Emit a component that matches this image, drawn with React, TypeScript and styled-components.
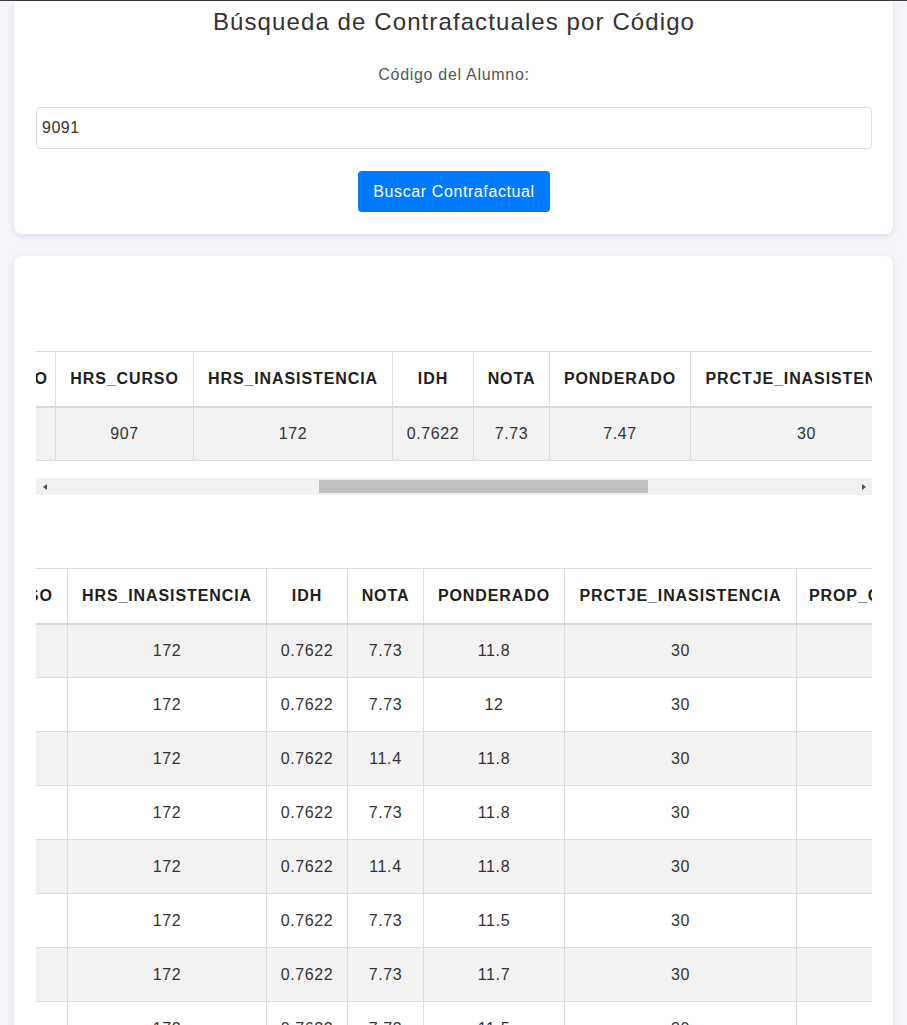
import React, { useLayoutEffect, useRef, useState } from "react";
import styled, { createGlobalStyle } from "styled-components";

const GlobalStyle = createGlobalStyle`
  html, body {
    margin: 0;
    padding: 0;
    overflow: hidden;
    background: #f4f4f9;
    font-family: "Liberation Sans", Arial, sans-serif;
    color: #333;
  }
  * { box-sizing: border-box; }
`;

type Column = { key: string; width: number };

const columns: Column[] = [
  { key: "CICLO", width: 100 },
  { key: "CODIGO", width: 110 },
  { key: "CREDITOS_APROBADOS", width: 225 },
  { key: "EDAD", width: 80 },
  { key: "ESCALA", width: 85 },
  { key: "GENERO", width: 95 },
  { key: "HRS_CURSO", width: 138 },
  { key: "HRS_INASISTENCIA", width: 199 },
  { key: "IDH", width: 81 },
  { key: "NOTA", width: 76 },
  { key: "PONDERADO", width: 141 },
  { key: "PRCTJE_INASISTENCIA", width: 232 },
  { key: "PROP_CREDITOS_APROBADOS", width: 278 },
  { key: "SEDE", width: 90 },
  { key: "TURNO", width: 108 },
];

const tableWidth = columns.reduce((s, c) => s + c.width, 0);

type Row = Record<string, string>;

const base: Row = {
  CICLO: "6",
  CODIGO: "9091",
  CREDITOS_APROBADOS: "118",
  EDAD: "22",
  ESCALA: "3",
  GENERO: "M",
  HRS_CURSO: "907",
  HRS_INASISTENCIA: "172",
  IDH: "0.7622",
  NOTA: "7.73",
  PONDERADO: "7.47",
  PRCTJE_INASISTENCIA: "30",
  PROP_CREDITOS_APROBADOS: "0.62",
  SEDE: "1",
  TURNO: "2",
};

const original: Row[] = [base];

const variants: Array<[string, string]> = [
  ["7.73", "11.8"],
  ["7.73", "12"],
  ["11.4", "11.8"],
  ["7.73", "11.8"],
  ["11.4", "11.8"],
  ["7.73", "11.5"],
  ["7.73", "11.7"],
  ["7.73", "11.5"],
];

const counterfactuals: Row[] = variants.map(([nota, pond]) => ({
  ...base,
  NOTA: nota,
  PONDERADO: pond,
}));

const TopLine = styled.div`
  height: 1px;
  background: #3a3a3a;
`;

const Page = styled.main`
  display: flex;
  flex-direction: column;
  gap: 22px;
  padding: 0 14px;
`;

const Card = styled.section<{ $cut?: boolean }>`
  background: #fff;
  border-radius: ${(p) => (p.$cut ? "0 0 8px 8px" : "8px")};
  box-shadow: 0 2px 6px rgba(30, 30, 60, 0.1);
  padding: ${(p) => (p.$cut ? "7px 21px 22px 22px" : "22px 21px 22px 22px")};
`;

const SearchForm = styled.form`
  display: flex;
  flex-direction: column;
  align-items: center;
`;

const Title = styled.h2`
  margin: 0;
  font-size: 24px;
  line-height: 28px;
  font-weight: 400;
  letter-spacing: 1.1px;
  color: #333;
  text-align: center;
`;

const Label = styled.label`
  margin-top: 30px;
  font-size: 16px;
  line-height: 18px;
  letter-spacing: 0.7px;
  color: #555;
`;

const Input = styled.input`
  margin-top: 23px;
  width: 100%;
  height: 42px;
  padding: 0 5px;
  border: 1px solid #ddd;
  border-radius: 4px;
  font-family: inherit;
  font-size: 16px;
  letter-spacing: 0.5px;
  color: #333;
  background: #fff;
  outline: none;
`;

const Button = styled.button`
  margin-top: 22px;
  height: 41px;
  padding: 0 15px;
  border: none;
  border-radius: 4px;
  background: #007bff;
  color: #fff;
  font-family: inherit;
  font-size: 16px;
  letter-spacing: 0.6px;
  cursor: pointer;
`;

const Section = styled.div<{ $top: number }>`
  padding-top: ${(p) => p.$top}px;
`;

const ScrollWrap = styled.div`
  overflow-x: auto;
  overflow-y: hidden;
  scrollbar-width: none;
  &::-webkit-scrollbar {
    display: none;
  }
`;

const ScrollBar = styled.div`
  display: flex;
  height: 17px;
  background: #f1f1f1;
`;

const ArrowButton = styled.div<{ $dir: "left" | "right" }>`
  flex: 0 0 17px;
  display: flex;
  align-items: center;
  justify-content: center;

  &::before {
    content: "";
    width: 0;
    height: 0;
    border-top: 3.5px solid transparent;
    border-bottom: 3.5px solid transparent;
    ${(p) =>
      p.$dir === "left"
        ? "border-right: 4px solid #505050;"
        : "border-left: 4px solid #505050;"}
  }
`;

const Track = styled.div`
  flex: 1;
  display: flex;
  align-items: center;
`;

const Thumb = styled.div`
  height: 13px;
  background: #c1c1c1;
`;

const Table = styled.table`
  width: ${tableWidth}px;
  table-layout: fixed;
  border-collapse: collapse;
  margin: 0 0 17px;
  font-size: 16px;
`;

const HeadCell = styled.th`
  height: 55px;
  padding: 0 12px;
  border: 1px solid #ddd;
  border-bottom: 2px solid #d8d8d8;
  text-align: center;
  font-weight: 700;
  letter-spacing: 0.9px;
  color: #1e1e1e;
  white-space: nowrap;
  overflow: hidden;
`;

const BodyRow = styled.tr`
  &:nth-child(odd) {
    background: #f2f2f2;
  }
`;

const Cell = styled.td`
  height: 54px;
  padding: 0 12px;
  border: 1px solid #ddd;
  text-align: center;
  letter-spacing: 0.6px;
  color: #333;
  white-space: nowrap;
  overflow: hidden;
`;

function DataTable({ rows, scroll }: { rows: Row[]; scroll: number }) {
  const ref = useRef<HTMLDivElement>(null);
  const [bar, setBar] = useState({ left: 0, size: 100 });
  useLayoutEffect(() => {
    const el = ref.current;
    if (!el) return;
    el.scrollLeft = scroll;
    const total = el.scrollWidth || 1;
    setBar({
      left: (el.scrollLeft / total) * 100,
      size: (el.clientWidth / total) * 100,
    });
  }, [scroll]);
  return (
    <>
      <ScrollWrap ref={ref}>
        <Table>
          <colgroup>
            {columns.map((c) => (
              <col key={c.key} style={{ width: c.width }} />
            ))}
          </colgroup>
          <thead>
            <tr>
              {columns.map((c) => (
                <HeadCell key={c.key}>{c.key}</HeadCell>
              ))}
            </tr>
          </thead>
          <tbody>
            {rows.map((r, i) => (
              <BodyRow key={i}>
                {columns.map((c) => (
                  <Cell key={c.key}>{r[c.key]}</Cell>
                ))}
              </BodyRow>
            ))}
          </tbody>
        </Table>
      </ScrollWrap>
      <ScrollBar>
        <ArrowButton $dir="left" />
        <Track>
          <Thumb style={{ marginLeft: `${bar.left}%`, width: `${bar.size}%` }} />
        </Track>
        <ArrowButton $dir="right" />
      </ScrollBar>
    </>
  );
}

export default function App() {
  return (
    <>
      <GlobalStyle />
      <TopLine />
      <Page>
        <Card $cut>
          <SearchForm onSubmit={(e) => e.preventDefault()}>
            <Title>Búsqueda de Contrafactuales por Código</Title>
            <Label htmlFor="codigo">Código del Alumno:</Label>
            <Input id="codigo" defaultValue="9091" />
            <Button type="submit">Buscar Contrafactual</Button>
          </SearchForm>
        </Card>
        <Card>
          <Section $top={73}>
            <DataTable rows={original} scroll={676} />
          </Section>
          <Section $top={73}>
            <DataTable rows={counterfactuals} scroll={802} />
          </Section>
        </Card>
      </Page>
    </>
  );
}
